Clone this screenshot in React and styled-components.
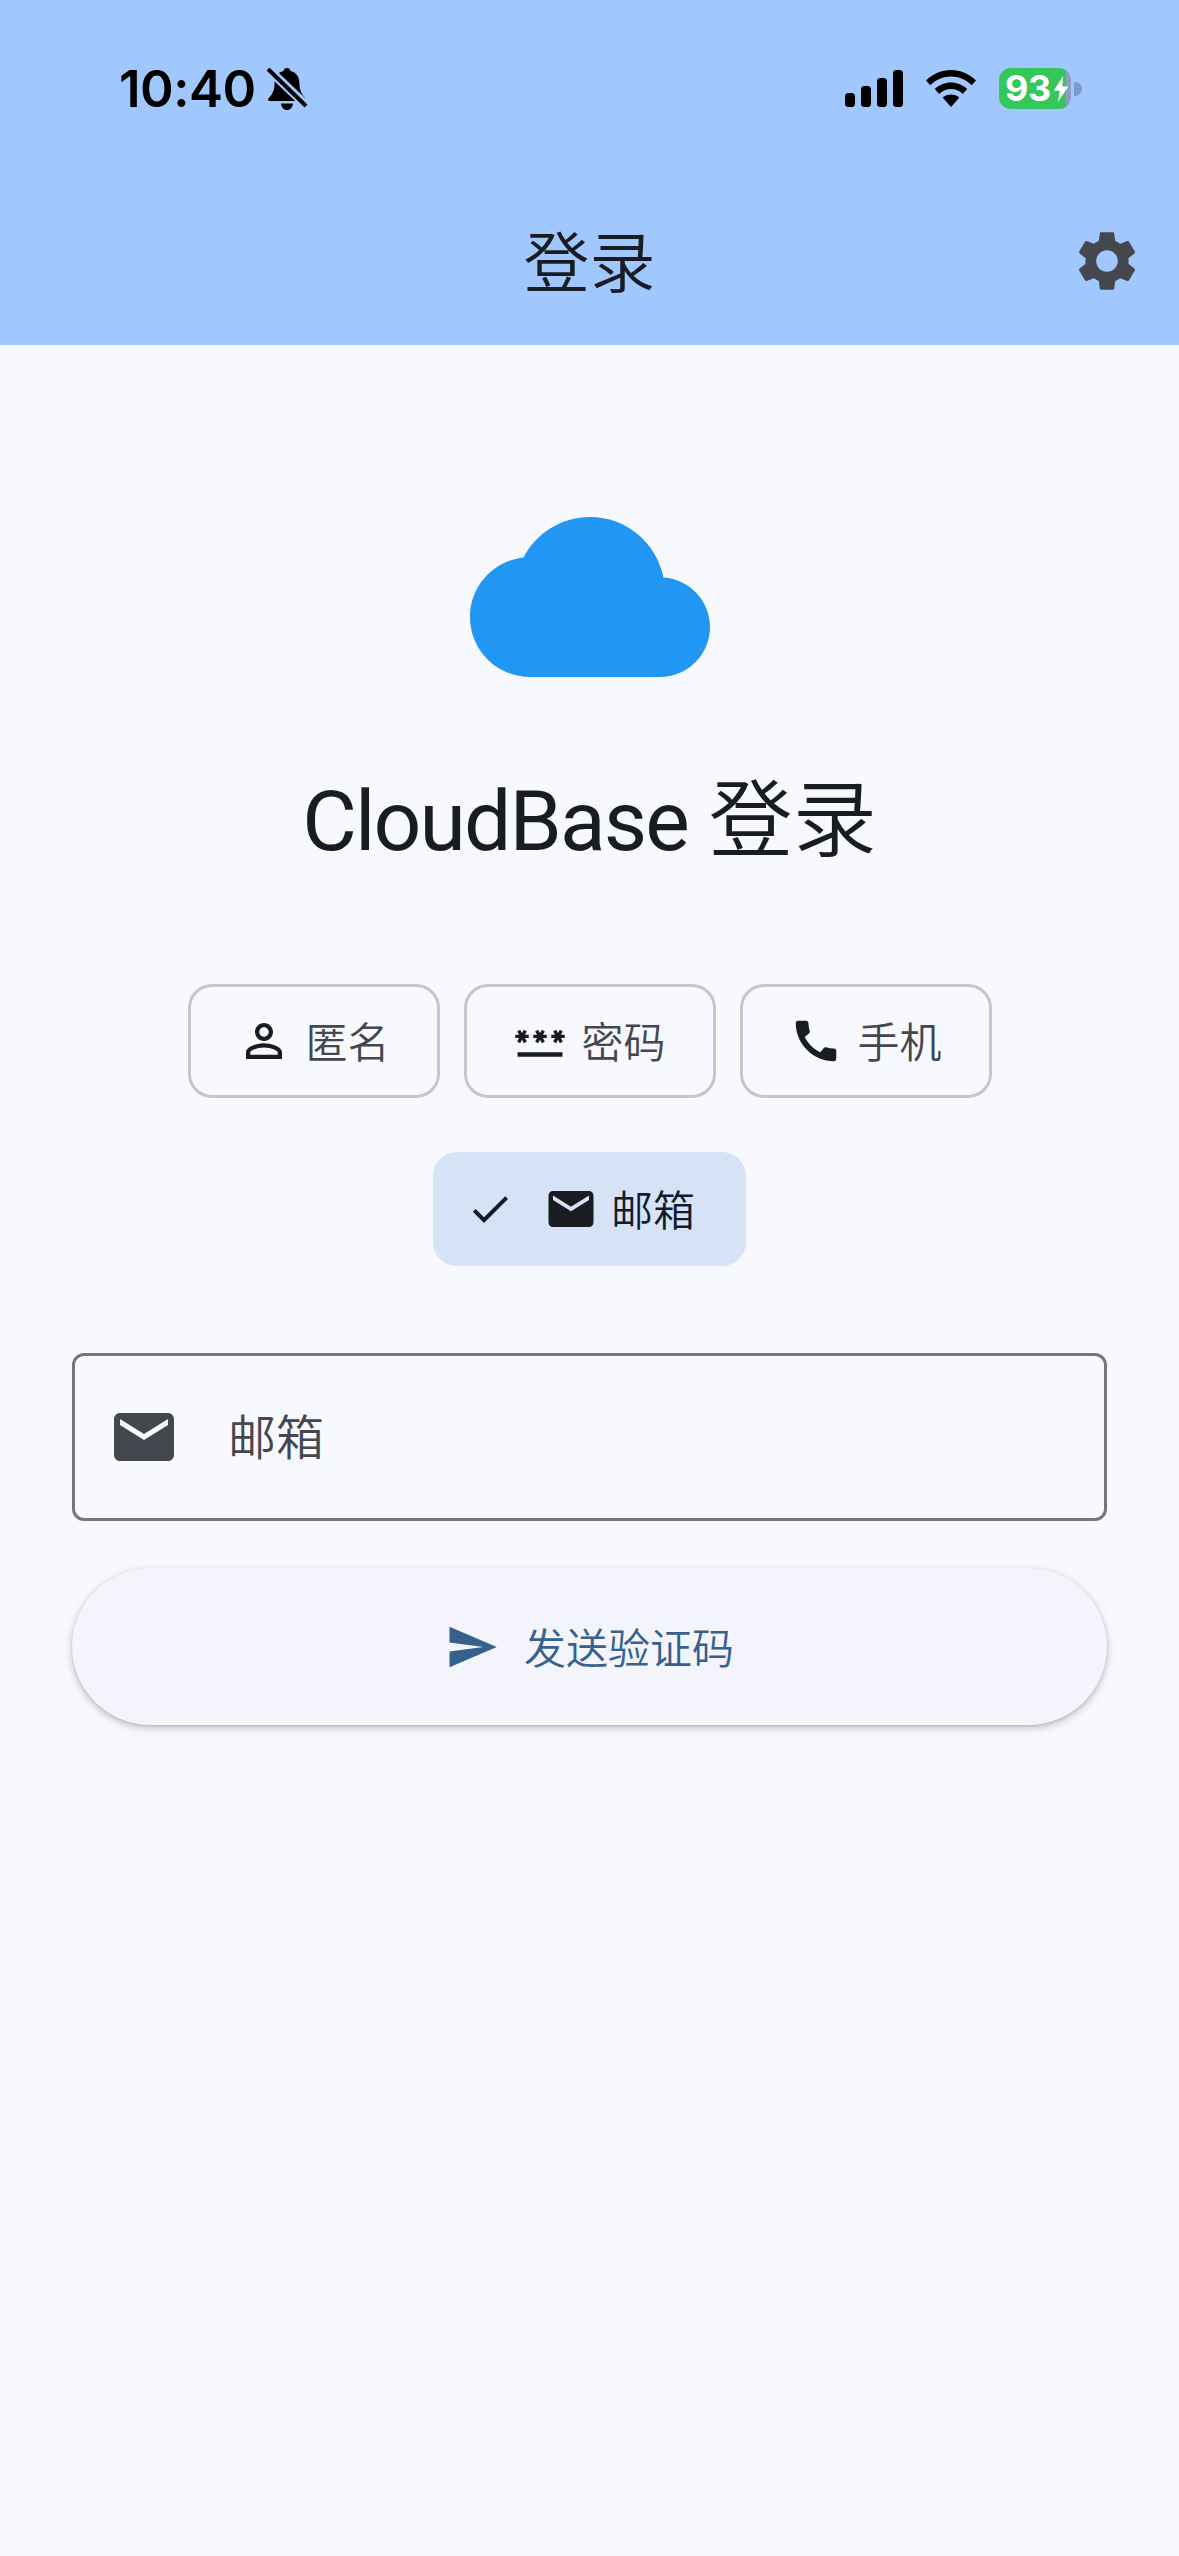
import React from 'react';
import styled, { createGlobalStyle } from 'styled-components';

const paths = {
  settings: 'M19.14 12.94c.04-.3.06-.61.06-.94 0-.32-.02-.64-.07-.94l2.03-1.58c.18-.14.23-.41.12-.61l-1.92-3.32c-.12-.22-.37-.29-.59-.22l-2.39.96c-.5-.38-1.03-.7-1.62-.94l-.36-2.54c-.04-.24-.24-.41-.48-.41h-3.84c-.24 0-.43.17-.47.41l-.36 2.54c-.59.24-1.13.57-1.62.94l-2.39-.96c-.22-.08-.47 0-.59.22L2.74 8.87c-.12.21-.08.47.12.61l2.03 1.58c-.05.3-.09.63-.09.94s.02.64.07.94l-2.03 1.58c-.18.14-.23.41-.12.61l1.92 3.32c.12.22.37.29.59.22l2.39-.96c.5.38 1.03.7 1.62.94l.36 2.54c.05.24.24.41.48.41h3.84c.24 0 .44-.17.47-.41l.36-2.54c.59-.24 1.13-.56 1.62-.94l2.39.96c.22.08.47 0 .59-.22l1.92-3.32c.12-.22.07-.47-.12-.61l-2.01-1.58zM12 15.6c-1.98 0-3.6-1.62-3.6-3.6s1.62-3.6 3.6-3.6 3.6 1.62 3.6 3.6-1.62 3.6-3.6 3.6z',
  cloud: 'M19.35 10.04C18.67 6.59 15.64 4 12 4 9.11 4 6.6 5.64 5.35 8.04 2.34 8.36 0 10.91 0 14c0 3.31 2.69 6 6 6h13c2.76 0 5-2.24 5-5 0-2.64-2.05-4.78-4.65-4.96z',
  person: 'M12 5.9c1.16 0 2.1.94 2.1 2.1s-.94 2.1-2.1 2.1S9.9 9.16 9.9 8s.94-2.1 2.1-2.1m0 9c2.97 0 6.1 1.46 6.1 2.1v1.1H5.9V17c0-.64 3.13-2.1 6.1-2.1M12 4C9.79 4 8 5.79 8 8s1.79 4 4 4 4-1.79 4-4-1.79-4-4-4zm0 9c-2.67 0-8 1.34-8 4v3h16v-3c0-2.66-5.33-4-8-4z',
  password: 'M2 17h20v2H2v-2zm1.15-4.05L4 11.47l.85 1.48 1.3-.75-.85-1.48H7v-1.5H5.3l.85-1.47L4.85 7 4 8.47 3.15 7l-1.3.75.85 1.47H1v1.5h1.7l-.85 1.48 1.3.75zm6.7-.75 1.3.75.85-1.48.85 1.48 1.3-.75-.85-1.48H15v-1.5h-1.7l.85-1.47-1.3-.75L12 8.47 11.15 7l-1.3.75.85 1.47H9v1.5h1.7l-.85 1.48zM23 9.22h-1.7l.85-1.47-1.3-.75L20 8.47 19.15 7l-1.3.75.85 1.47H17v1.5h1.7l-.85 1.48 1.3.75.85-1.48.85 1.48 1.3-.75-.85-1.48H23v-1.5z',
  phone: 'M20.01 15.38c-1.23 0-2.42-.2-3.53-.56-.35-.12-.74-.03-1.01.24l-1.57 1.97c-2.83-1.35-5.48-3.9-6.89-6.83l1.95-1.66c.27-.28.35-.67.24-1.02-.37-1.11-.56-2.3-.56-3.53 0-.54-.45-.99-.99-.99H4.19C3.65 3 3 3.24 3 3.99 3 13.28 10.73 21 20.01 21c.71 0 .99-.63.99-1.18v-3.45c0-.54-.45-.99-.99-.99z',
  check: 'M9 16.17L4.83 12l-1.42 1.41L9 19 21 7l-1.41-1.41z',
  mail: 'M20 4H4c-1.1 0-1.99.9-1.99 2L2 18c0 1.1.9 2 2 2h16c1.1 0 2-.9 2-2V6c0-1.1-.9-2-2-2zm0 4l-8 5-8-5V6l8 5 8-5v2z',
  send: 'M2.01 21L23 12 2.01 3 2 10l15 2-15 2z',
};

const FONT = `Roboto, "Noto Sans CJK SC", sans-serif`;
const CJK = `"Noto Sans CJK SC", sans-serif`;

const Global = createGlobalStyle`
  html, body { margin: 0; padding: 0; background: #f8f9ff; }
  body { font-family: ${CJK}; font-weight: 350; }
`;

const Page = styled.div`
  width: 1179px;
  height: 2556px;
  background: #f8f9ff;
  overflow: hidden;
`;

const Head = styled.header`
  background: #a0c8fe;
  height: 345px;
`;

const StatusBar = styled.div`
  height: 177px;
  box-sizing: border-box;
  padding: 0 97px 0 119px;
  display: flex;
  align-items: center;
  justify-content: space-between;
`;

const StatusGroup = styled.div`
  display: flex;
  align-items: center;
  gap: ${p => p.$gap}px;
`;

const Time = styled.span`
  font-family: Inter, sans-serif;
  font-weight: 600;
  font-size: 51px;
  line-height: 50px;
  letter-spacing: -0.5px;
  color: #000;
`;

const Battery = styled.div`
  display: flex;
  align-items: center;
  gap: 3px;
`;

const BatteryBody = styled.div`
  width: 72px;
  height: 41px;
  border-radius: 12px;
  background: linear-gradient(90deg, #34c759 0 93%, #8a9fc0 93% 100%);
  display: flex;
  align-items: center;
  padding-left: 6px;
  box-sizing: border-box;
  font-family: Inter, sans-serif;
  font-weight: 700;
  font-size: 36px;
  line-height: 41px;
  letter-spacing: -0.5px;
  color: #fff;
`;

const BatteryCap = styled.div`
  width: 8px;
  height: 14px;
  border-radius: 0 7px 7px 0;
  background: #7d9ac8;
`;

const AppBar = styled.div`
  height: 168px;
  display: grid;
  grid-template-columns: 144px 1fr 144px;
  align-items: center;
`;

const AppTitle = styled.h1`
  grid-column: 2;
  margin: 0;
  padding-bottom: 7px;
  text-align: center;
  font-weight: 350;
  font-size: 66px;
  line-height: 84px;
  color: #191c20;
`;

const IconButton = styled.button`
  grid-column: 3;
  width: 144px;
  height: 144px;
  padding: 0;
  border: 0;
  background: none;
  display: flex;
  align-items: center;
  justify-content: center;
`;

const Svg = styled.svg`
  display: block;
  flex: none;
  width: ${p => p.$size}px;
  height: ${p => p.$size}px;
  fill: ${p => p.$color};
`;

const Icon = ({ name, size, color }) => (
  <Svg viewBox="0 0 24 24" $size={size} $color={color}>
    <path d={paths[name]} />
  </Svg>
);

const Main = styled.main`
  padding: 132px 72px 0;
  display: flex;
  flex-direction: column;
  align-items: center;
`;

const Title = styled.h2`
  margin: 37px 0 0;
  height: 120px;
  font-family: ${FONT};
  font-weight: 400;
  font-size: 84px;
  line-height: 120px;
  color: #191c20;
`;

const TitleLatin = styled.span`
  letter-spacing: -1.9px;
`;

const TitleCjk = styled.span`
  font-family: ${CJK};
  font-weight: 350;
`;

const ChipRows = styled.div`
  margin-top: 110px;
  display: flex;
  flex-direction: column;
  align-items: center;
  gap: 54px;
`;

const ChipRow = styled.div`
  display: flex;
  gap: 24px;
`;

const Chip = styled.div`
  box-sizing: border-box;
  width: ${p => p.$width}px;
  height: 114px;
  border-radius: 24px;
  border: ${p => (p.$selected ? '0' : '3px solid #c4c6cf')};
  background: ${p => (p.$selected ? '#d6e3f7' : 'transparent')};
  display: flex;
  align-items: center;
  justify-content: ${p => (p.$selected ? 'flex-start' : 'center')};
  padding-left: ${p => (p.$selected ? 33 : 0)}px;
  gap: ${p => (p.$selected ? 13 : 14)}px;
  font-size: 42px;
  line-height: 60px;
  color: ${p => (p.$selected ? '#101c2b' : '#44474e')};
`;

const CheckSlot = styled.span`
  margin-right: 17px;
`;

const Label = styled.span`
  padding-bottom: ${p => p.$lift}px;
`;

const Field = styled.div`
  box-sizing: border-box;
  margin-top: 87px;
  width: 100%;
  height: 168px;
  border: 3px solid #74777f;
  border-radius: 12px;
  display: flex;
  align-items: center;
  padding-left: 33px;
  gap: 48px;
  font-size: 48px;
  color: #44474e;
`;

const SendButton = styled.button`
  margin-top: 47px;
  width: 100%;
  height: 157px;
  border: 0;
  border-radius: 79px;
  background: #f3f4fc;
  box-shadow: 0 3px 9px rgba(0, 0, 0, 0.22), 0 1px 3px rgba(0, 0, 0, 0.12);
  display: flex;
  align-items: center;
  justify-content: center;
  gap: 25px;
  font-family: ${CJK};
  font-weight: 350;
  font-size: 42px;
  color: #36618e;
`;

const Signal = () => (
  <svg width="58" height="37" viewBox="0 0 58 37" style={{ display: 'block' }}>
    <rect x="0" y="23" width="10" height="14" rx="3.5" />
    <rect x="16" y="16" width="10" height="21" rx="3.5" />
    <rect x="32" y="8" width="10" height="29" rx="3.5" />
    <rect x="48" y="0" width="10" height="37" rx="3.5" />
  </svg>
);

const Wifi = () => (
  <svg width="50" height="37" viewBox="0 0 50 37" style={{ display: 'block' }}>
    <path d="M25 0C15.500 0 7 3.700 0 10.500l4.300 4.700C10 9.600 17 6.500 25 6.500s15 3.100 20.700 8.700L50 10.500C43 3.700 34.500 0 25 0z" />
    <path d="M25 12.500c-6.200 0-11.800 2.400-16.200 6.600l4.400 4.800c3.200-3 7.300-4.800 11.800-4.800s8.600 1.800 11.800 4.800l4.400-4.800C36.800 14.900 31.200 12.500 25 12.500z" />
    <path d="M25 24.500c-3.200 0-6 1.200-8.200 3.200L25 37l8.200-9.300c-2.200-2-5-3.200-8.200-3.200z" />
  </svg>
);

const MutedBell = () => (
  <svg width="42" height="42" viewBox="0 0 42 42" style={{ display: 'block' }}>
    <path d="M21 0c-1.900 0-3.200 1.300-3.400 3C10.800 4.400 8.500 10 8.500 16c0 6-2 10-6 14.500-.9 1.200-.3 2.500 1.200 2.500h34.600c1.500 0 2.100-1.300 1.200-2.500-4-4.500-6-8.500-6-14.500 0-6-2.300-11.600-9.100-13C24.200 1.300 22.900 0 21 0z" />
    <path d="M15 35.500c.3 3.800 2.800 6.500 6 6.500s5.700-2.700 6-6.500z" />
    <path d="M1 0l40 38" stroke="#a0c8fe" strokeWidth="9" />
    <path d="M2 1l38 37" stroke="#000" strokeWidth="4" />
  </svg>
);

const Bolt = () => (
  <svg width="16" height="26" viewBox="0 0 17 30" style={{ display: 'block', marginLeft: 2 }}>
    <path d="M11 0L0 17h7L5 30l12-18h-7z" fill="#fff" />
  </svg>
);

export default function App() {
  return (
    <Page>
      <Global />
      <Head>
        <StatusBar>
          <StatusGroup $gap={10}>
            <Time>10:40</Time>
            <MutedBell />
          </StatusGroup>
          <StatusGroup $gap={23}>
            <Signal />
            <Wifi />
            <Battery>
              <BatteryBody>
                93
                <Bolt />
              </BatteryBody>
              <BatteryCap />
            </Battery>
          </StatusGroup>
        </StatusBar>
        <AppBar>
          <AppTitle>登录</AppTitle>
          <IconButton>
            <Icon name="settings" size={72} color="#44474e" />
          </IconButton>
        </AppBar>
      </Head>
      <Main>
        <Icon name="cloud" size={240} color="#2196f3" />
        <Title>
          <TitleLatin>CloudBase</TitleLatin> <TitleCjk>登录</TitleCjk>
        </Title>
        <ChipRows>
          <ChipRow>
            <Chip $width={252}>
              <Icon name="person" size={54} color="#191c20" />
              <Label $lift={3}>匿名</Label>
            </Chip>
            <Chip $width={252}>
              <Icon name="password" size={54} color="#191c20" />
              <Label $lift={3}>密码</Label>
            </Chip>
            <Chip $width={252}>
              <Icon name="phone" size={54} color="#191c20" />
              <Label $lift={3}>手机</Label>
            </Chip>
          </ChipRow>
          <Chip $width={313} $selected>
            <CheckSlot>
              <Icon name="check" size={48} color="#101c2b" />
            </CheckSlot>
            <Icon name="mail" size={54} color="#191c20" />
            <Label $lift={3}>邮箱</Label>
          </Chip>
        </ChipRows>
        <Field>
          <Icon name="mail" size={72} color="#44474e" />
          <Label $lift={7}>邮箱</Label>
        </Field>
        <SendButton>
          <Icon name="send" size={54} color="#36618e" />
          <Label $lift={2}>发送验证码</Label>
        </SendButton>
      </Main>
    </Page>
  );
}
